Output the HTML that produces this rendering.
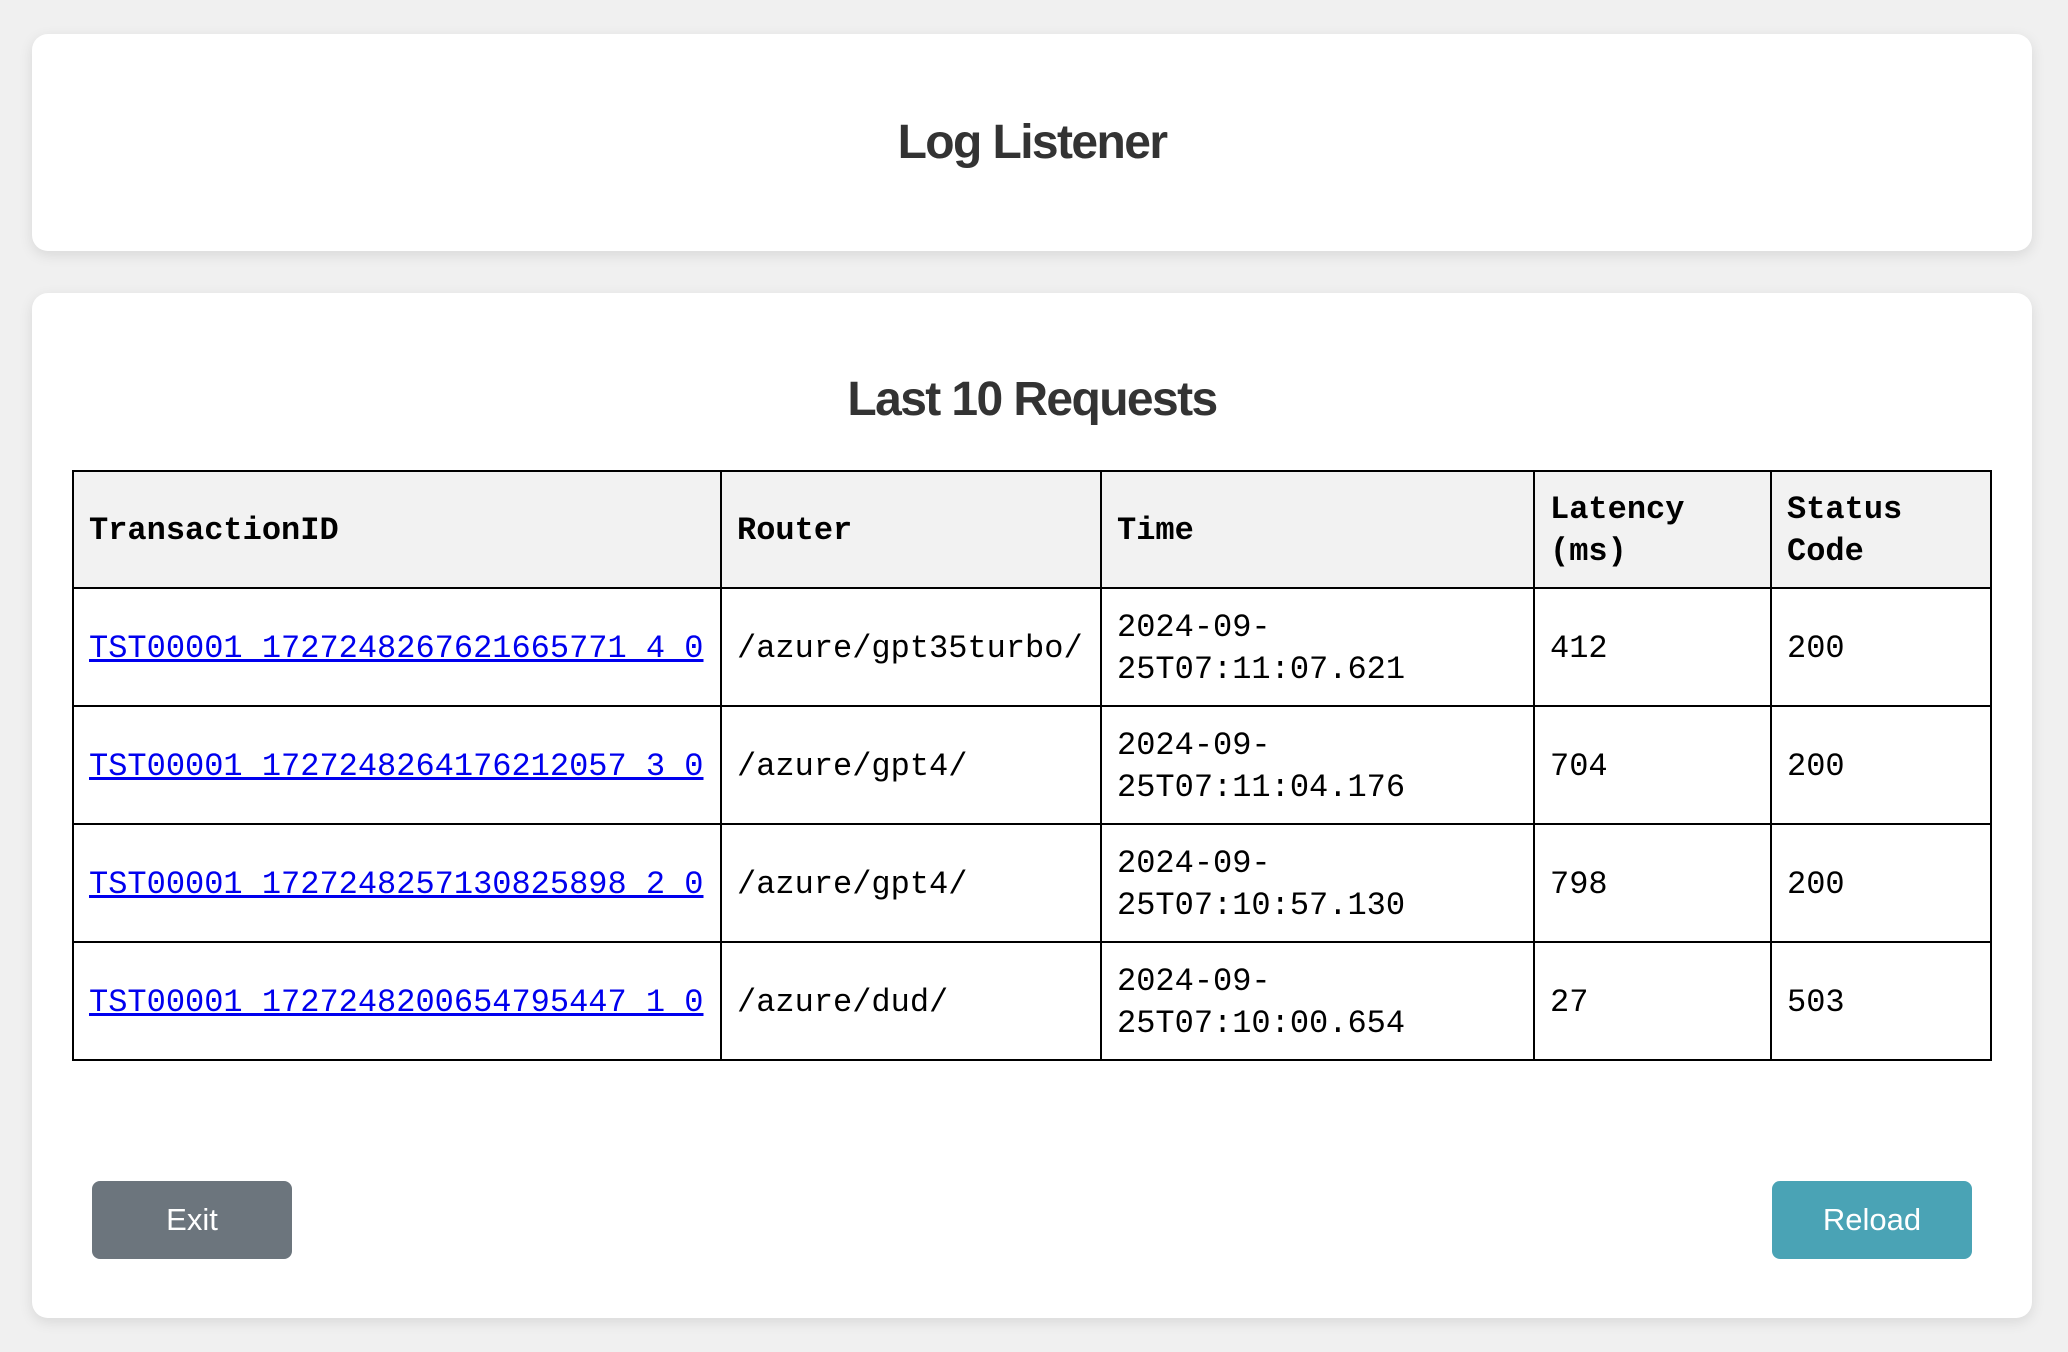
<!DOCTYPE html>
<html><head><meta charset="utf-8"><style>
*{margin:0;padding:0;box-sizing:border-box}
html,body{width:2068px;height:1352px;background:#f0f0f0;overflow:hidden;font-family:"Liberation Sans",sans-serif}
.card{position:absolute;left:32px;width:2000px;background:#fff;border-radius:16px;box-shadow:0 4px 14px rgba(0,0,0,.10)}
h1,h2{position:absolute;left:0;right:0;text-align:center;color:#333;font-weight:bold;letter-spacing:-1.6px;font-size:48px;line-height:56px}
table{position:absolute;left:72px;top:470px;width:1918px;border-collapse:collapse;font-family:"Liberation Mono",monospace;font-size:32px;line-height:42px;table-layout:fixed}
td,th{border:2px solid #000;padding:3px 15px 0;text-align:left;vertical-align:middle;height:118px;color:#000}
th{background:#f2f2f2;height:117px;font-weight:bold}
a{color:#0000ee;text-decoration:underline}
.btn{position:absolute;top:1181px;width:200px;height:78px;border-radius:8px;color:#fff;font-size:31px;line-height:78px;text-align:center}
</style></head><body>
<div class="card" style="top:34px;height:217px"><h1 style="top:81px">Log Listener</h1></div>
<div class="card" style="top:293px;height:1025px">
<h2 style="top:79px">Last 10 Requests</h2>
</div>
<table>
<colgroup><col style="width:648px"><col style="width:380px"><col style="width:433px"><col style="width:237px"><col style="width:220px"></colgroup>
<tr><th>TransactionID</th><th>Router</th><th>Time</th><th>Latency (ms)</th><th>Status Code</th></tr>
<tr><td><a>TST00001_1727248267621665771_4_0</a></td><td>/azure/gpt35turbo/</td><td>2024-09-<br>25T07:11:07.621</td><td>412</td><td>200</td></tr>
<tr><td><a>TST00001_1727248264176212057_3_0</a></td><td>/azure/gpt4/</td><td>2024-09-<br>25T07:11:04.176</td><td>704</td><td>200</td></tr>
<tr><td><a>TST00001_1727248257130825898_2_0</a></td><td>/azure/gpt4/</td><td>2024-09-<br>25T07:10:57.130</td><td>798</td><td>200</td></tr>
<tr><td><a>TST00001_1727248200654795447_1_0</a></td><td>/azure/dud/</td><td>2024-09-<br>25T07:10:00.654</td><td>27</td><td>503</td></tr>
</table>
<div class="btn" style="left:92px;background:#6c757d">Exit</div>
<div class="btn" style="left:1772px;background:#4aa3b5">Reload</div>
</body></html>
